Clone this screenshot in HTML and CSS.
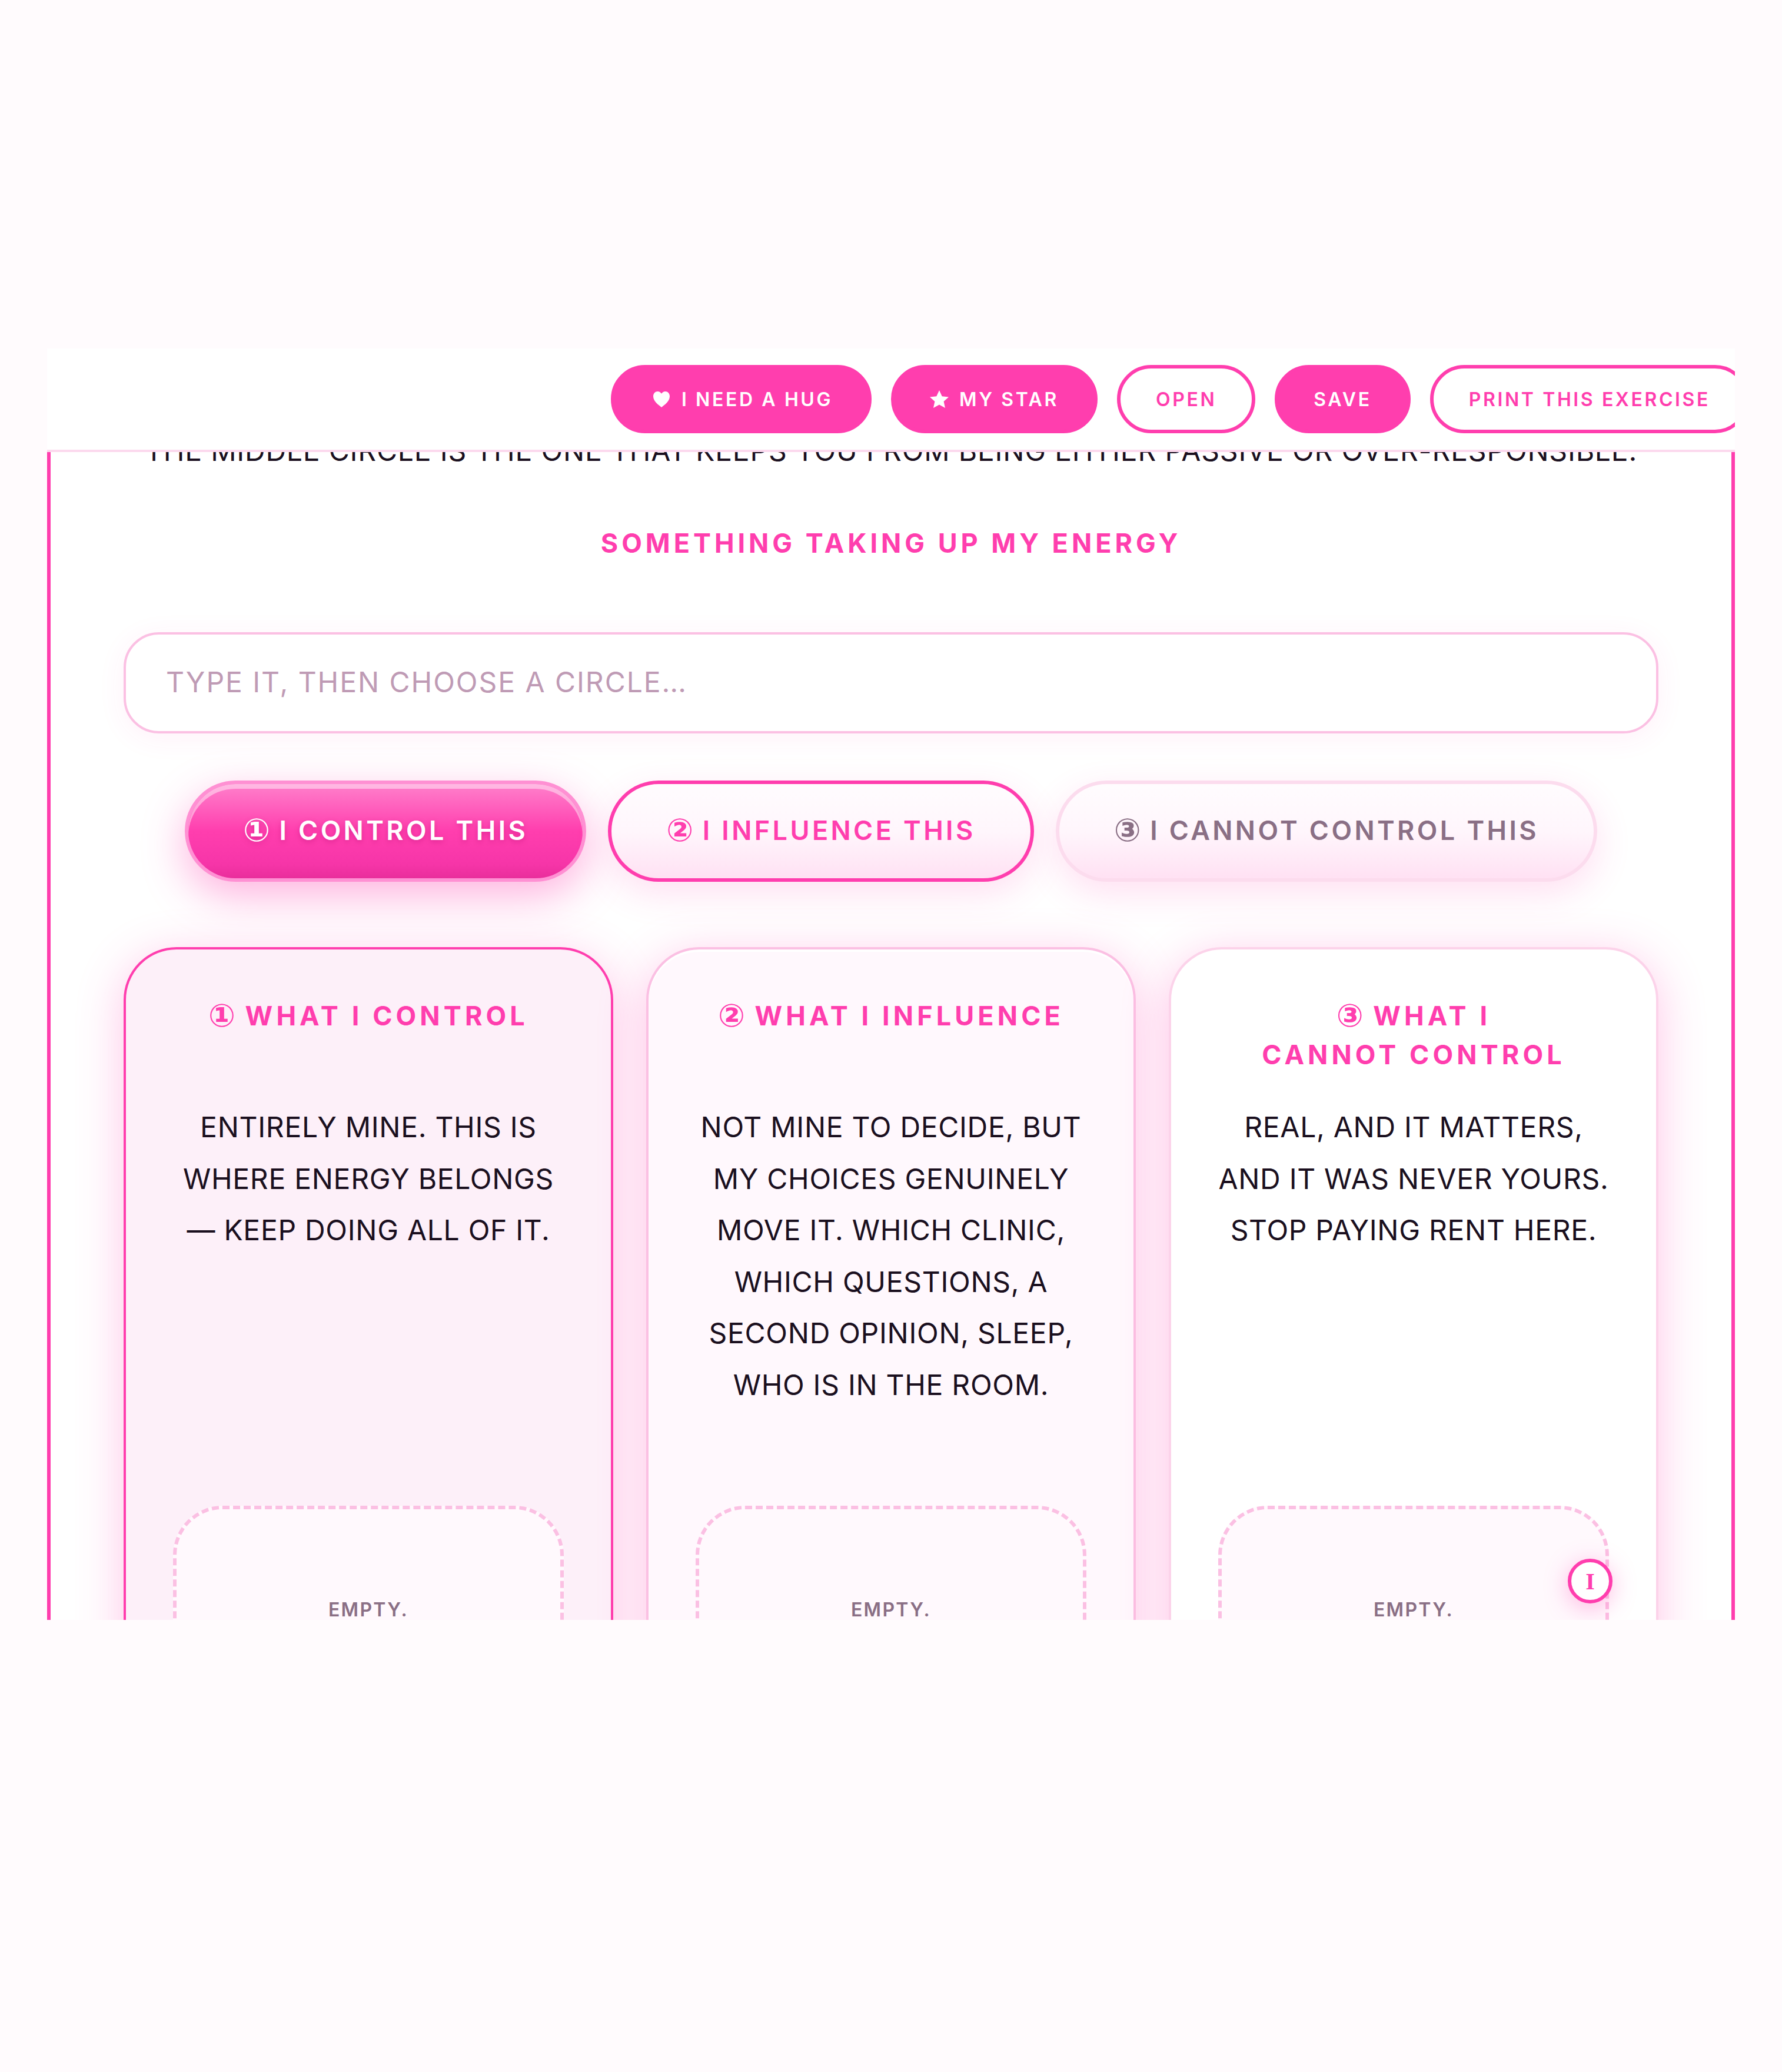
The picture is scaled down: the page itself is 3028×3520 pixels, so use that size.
FILE: index.html
```html
<!DOCTYPE html>
<html lang="en">
<head>
<meta charset="utf-8">
<title>Circles of control</title>
<link rel="stylesheet" href="styles.css">
</head>
<body>
<main class="stage">
  <header class="toolbar">
    <button class="pill solid"><svg class="pill-icon heart" viewBox="0 0 28 27"><path d="M14 27C10 23.500 0 17 0 8.200 0 3.500 3.400 0 7.500 0 10.200 0 12.600 1.400 14 3.700 15.400 1.400 17.800 0 20.500 0 24.600 0 28 3.500 28 8.200 28 17 18 23.500 14 27Z"/></svg>I NEED A HUG</button>
    <button class="pill solid"><svg class="pill-icon star" viewBox="0 0 32 30"><path d="M16 0l4.700 10.200 11.300 1.200-8.400 7.500 2.400 11.100L16 24.400 6 30l2.400-11.100L0 11.400l11.300-1.200Z"/></svg>MY STAR</button>
    <button class="pill outline">OPEN</button>
    <button class="pill solid">SAVE</button>
    <button class="pill outline">PRINT THIS EXERCISE</button>
  </header>
  <section class="panel">
    <p class="lede">THE MIDDLE CIRCLE IS THE ONE THAT KEEPS YOU FROM BEING EITHER PASSIVE OR OVER-RESPONSIBLE.</p>
    <h2 class="prompt">SOMETHING TAKING UP MY ENERGY</h2>
    <input class="entry" type="text" placeholder="TYPE IT, THEN CHOOSE A CIRCLE…">
    <div class="choices">
      <button class="choice active"><span class="num">①</span> I CONTROL THIS</button>
      <button class="choice second"><span class="num">②</span> I INFLUENCE THIS</button>
      <button class="choice third"><span class="num">③</span> I CANNOT CONTROL THIS</button>
    </div>
    <div class="cards">
      <article class="card card-a">
        <h3 class="card-title"><span class="num">①</span> WHAT I CONTROL</h3>
        <p class="card-text">ENTIRELY MINE. THIS IS WHERE ENERGY BELONGS — KEEP DOING ALL OF IT.</p>
        <div class="drop">EMPTY.</div>
      </article>
      <article class="card card-b">
        <h3 class="card-title"><span class="num">②</span> WHAT I INFLUENCE</h3>
        <p class="card-text">NOT MINE TO DECIDE, BUT MY CHOICES GENUINELY MOVE IT. WHICH CLINIC, WHICH QUESTIONS, A SECOND OPINION, SLEEP, WHO IS IN THE ROOM.</p>
        <div class="drop">EMPTY.</div>
      </article>
      <article class="card card-c">
        <h3 class="card-title"><span class="num">③</span> WHAT I CANNOT&nbsp;CONTROL</h3>
        <p class="card-text">REAL, AND IT MATTERS, AND IT WAS NEVER YOURS. STOP PAYING RENT HERE.</p>
        <div class="drop">EMPTY.</div>
      </article>
    </div>
  </section>
  <button class="info">I</button>
</main>
</body>
</html>
```
FILE: styles.css
```css
* { box-sizing: border-box; }
html, body { margin: 0; }
body {
  background: #fffbfd;
  padding: 592px 80px 768px;
  font-family: "Inter", "Liberation Sans", sans-serif;
  color: #1a0f1e;
}
button, input { font-family: inherit; }
.stage {
  position: relative;
  height: 2160px;
  overflow: hidden;
}
.toolbar {
  position: relative;
  z-index: 2;
  display: flex;
  gap: 33px;
  height: 176px;
  padding: 28px 0 0 958px;
  background: #fff;
  border-bottom: 4px solid #fcd9ee;
}
.pill {
  display: flex;
  flex: none;
  align-items: center;
  justify-content: center;
  gap: 20px;
  height: 116px;
  padding: 0 60px;
  border: 6px solid #ff3eae;
  border-radius: 58px;
  font-size: 32px;
  font-weight: 600;
  letter-spacing: 3.6px;
  white-space: nowrap;
}
.solid { background: #ff3eae; color: #fff; }
.outline { background: #fff; color: #ff3eae; }
.pill-icon { width: 28px; height: 27px; fill: #fff; }
.heart { margin-left: 6px; }
.star { width: 32px; height: 30px; margin-right: -2px; }
.panel {
  margin-top: -46px;
  padding: 0 124px;
  background: #fff;
  border-left: 6px solid #ff3eae;
  border-right: 6px solid #ff3eae;
  height: 2200px;
}
.lede {
  margin: 0;
  font-size: 48px;
  line-height: 88px;
  letter-spacing: .8px;
  text-align: center;
  white-space: nowrap;
}
.prompt {
  margin: 80px 0 118px;
  font-size: 45px;
  font-weight: 700;
  line-height: 66px;
  letter-spacing: 5.95px;
  text-align: center;
  color: #ff3eae;
}
.entry {
  display: block;
  width: 100%;
  height: 172px;
  padding: 0 68px 3px;
  border: 4px solid #fbc0e3;
  border-radius: 60px;
  background: #fff;
  box-shadow: 0 8px 48px rgba(255, 62, 174, .07);
  font-size: 48px;
  letter-spacing: 1.95px;
  outline: none;
}
.entry::placeholder { color: #bf9bb5; opacity: 1; }
.choices {
  display: flex;
  justify-content: center;
  gap: 37px;
  margin: 80px 0 111px;
}
.choice {
  height: 172px;
  padding: 0 93px 4px;
  border: 6px solid #ff3eae;
  border-radius: 86px;
  background: linear-gradient(180deg, #fffcfe 0%, #fff6fc 50%, #ffe1f3 100%);
  box-shadow: 0 20px 60px rgba(255, 62, 174, .16);
  font-size: 45px;
  font-weight: 600;
  letter-spacing: 4.4px;
  white-space: nowrap;
  color: #ff3eae;
}
.active {
  border-color: #ff90d3;
  background: linear-gradient(180deg, #ff80cb 0%, #ff3eae 50%, #f635a8 85%, #e92e9c 100%);
  box-shadow: inset 0 8px 0 rgba(255, 255, 255, .45), 0 24px 72px rgba(255, 62, 174, .4);
  color: #fff;
  text-shadow: 0 3px 8px rgba(170, 0, 100, .35);
}
.third {
  border-color: #fcdcee;
  color: #8a6f85;
}
.num { font-family: "DejaVu Sans", sans-serif; font-size: 54px; font-weight: 700; line-height: 1; letter-spacing: 0; vertical-align: -2px; }
.cards {
  display: grid;
  grid-template-columns: repeat(3, 1fr);
  gap: 56px;
  align-items: stretch;
}
.card {
  min-height: 1200px;
  padding: 80px 80px 0;
  border: 4px solid #fbc0e3;
  border-radius: 90px;
  box-shadow: inset 0 4px 0 #fff, 0 16px 80px rgba(255, 62, 174, .3);
  text-align: center;
}
.card-a { border-color: #ff3eae; background: #fdf0f9; box-shadow: 0 16px 80px rgba(255, 62, 174, .3); }
.card-b { background: #fff8fd; }
.card-c { border-color: #fcd3ea; background: #fff; }
.card-title {
  min-height: 132px;
  margin: 0 0 46px;
  font-size: 45px;
  font-weight: 700;
  line-height: 66px;
  letter-spacing: 6.1px;
  color: #ff3eae;
}
.card-text {
  min-height: 639px;
  margin: 0 0 48px;
  font-size: 48px;
  line-height: 87.6px;
  letter-spacing: .7px;
}
.drop {
  min-height: 400px;
  padding-top: 151px;
  border: 6px dashed #fbc0e3;
  border-radius: 84px;
  background: #fff9fd;
  font-size: 32px;
  font-weight: 600;
  line-height: 40px;
  letter-spacing: 2.3px;
  color: #8a6f85;
}
.info {
  position: absolute;
  top: 2056px;
  right: 208px;
  width: 76px;
  height: 76px;
  padding: 0;
  border: 6px solid #ff3eae;
  border-radius: 50%;
  background: #fff;
  box-shadow: 0 8px 40px rgba(255, 62, 174, .35);
  font-family: "Liberation Serif", serif;
  font-size: 40px;
  font-weight: 700;
  color: #ff3eae;
}
```
